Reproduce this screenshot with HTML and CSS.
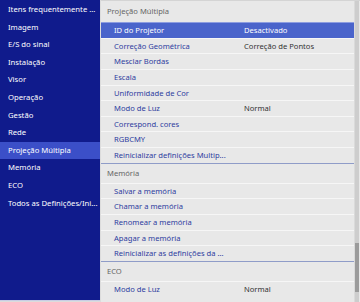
FILE: index.html
```html
<!DOCTYPE html>
<html lang="pt">
<head>
    <meta charset="UTF-8">
    <meta name="viewport" content="width=device-width, initial-scale=1.0">
    <title>Projeção Múltipla</title>
    <link rel="stylesheet" href="styles.css">
</head>
<body>
    <div class="screen">
        <ul class="sidebar">
            <li>Itens frequentemente ...</li>
            <li>Imagem</li>
            <li>E/S do sinal</li>
            <li>Instalação</li>
            <li>Visor</li>
            <li>Operação</li>
            <li>Gestão</li>
            <li>Rede</li>
            <li class="active">Projeção Múltipla</li>
            <li>Memória</li>
            <li>ECO</li>
            <li>Todos as Definições/Ini...</li>
        </ul>
        <div class="panel">
            <div class="menu">
                <div class="section first">
                    <div class="section-title">Projeção Múltipla</div>
                    <div class="row selected"><span class="label">ID do Projetor</span><span class="value">Desactivado</span></div>
                    <div class="row"><span class="label">Correção Geométrica</span><span class="value">Correção de Pontos</span></div>
                    <div class="row"><span class="label">Mesclar Bordas</span></div>
                    <div class="row"><span class="label">Escala</span></div>
                    <div class="row"><span class="label">Uniformidade de Cor</span></div>
                    <div class="row"><span class="label">Modo de Luz</span><span class="value">Normal</span></div>
                    <div class="row"><span class="label">Correspond. cores</span></div>
                    <div class="row"><span class="label">RGBCMY</span></div>
                    <div class="row"><span class="label">Reinicializar definições Multip...</span></div>
                </div>
                <div class="section">
                    <div class="section-title">Memória</div>
                    <div class="row"><span class="label">Salvar a memória</span></div>
                    <div class="row"><span class="label">Chamar a memória</span></div>
                    <div class="row"><span class="label">Renomear a memória</span></div>
                    <div class="row"><span class="label">Apagar a memória</span></div>
                    <div class="row"><span class="label">Reinicializar as definições da ...</span></div>
                </div>
                <div class="section">
                    <div class="section-title">ECO</div>
                    <div class="row"><span class="label">Modo de Luz</span><span class="value">Normal</span></div>
                </div>
            </div>
            <div class="scrollbar">
                <div class="thumb"></div>
            </div>
        </div>
    </div>
</body>
</html>
```

FILE: styles.css
```css
body {
    margin: 0;
    padding: 0;
    background-color: #dcdcdc;
    font-family: "Noto Sans", "Open Sans", sans-serif;
}

.screen {
    display: flex;
    width: 360px;
    height: 302px;
    overflow: hidden;
}

.sidebar {
    list-style: none;
    margin: 0;
    padding: 1px 0 0 0;
    width: 100px;
    height: 299px;
    background-color: #101b8c;
    border-bottom: 1px solid #c8cbe4;
}

.sidebar li {
    height: 17.6px;
    line-height: 17.6px;
    padding-left: 8px;
    font-size: 7.7px;
    color: #ffffff;
    white-space: nowrap;
    overflow: hidden;
}

.sidebar li.active {
    background-color: #3b4fc8;
}

.panel {
    display: flex;
    flex: 1;
    margin-left: 1px;
    background-color: #e8e8e8;
    border-top: 1px solid #d4d4d4;
}

.menu {
    flex: 1;
}

.section {
    border-top: 1px solid #8f9cc8;
}

.section.first {
    border-top: none;
}

.section-title {
    height: 19px;
    line-height: 19px;
    padding-left: 6px;
    font-size: 7.6px;
    color: #666666;
}

.section.first .section-title {
    height: 21px;
    line-height: 21px;
}

.row {
    display: flex;
    height: 14.65px;
    line-height: 14.65px;
    border-top: 1px solid #f6f6f6;
    padding-left: 13px;
    font-size: 7.6px;
    white-space: nowrap;
}

.row .label {
    width: 130px;
    color: #2e3d9f;
}

.row .value {
    color: #333333;
}

.row.selected {
    background-color: #4a64cb;
    border-top-color: #8d9de0;
}

.row.selected .label,
.row.selected .value {
    color: #ffffff;
}

.scrollbar {
    width: 4px;
    margin-right: 1px;
    background-color: #cdcdcd;
    border-left: 1px solid #dadada;
}

.thumb {
    margin-top: 242px;
    height: 49px;
    background-color: #9b9b9b;
}
```
